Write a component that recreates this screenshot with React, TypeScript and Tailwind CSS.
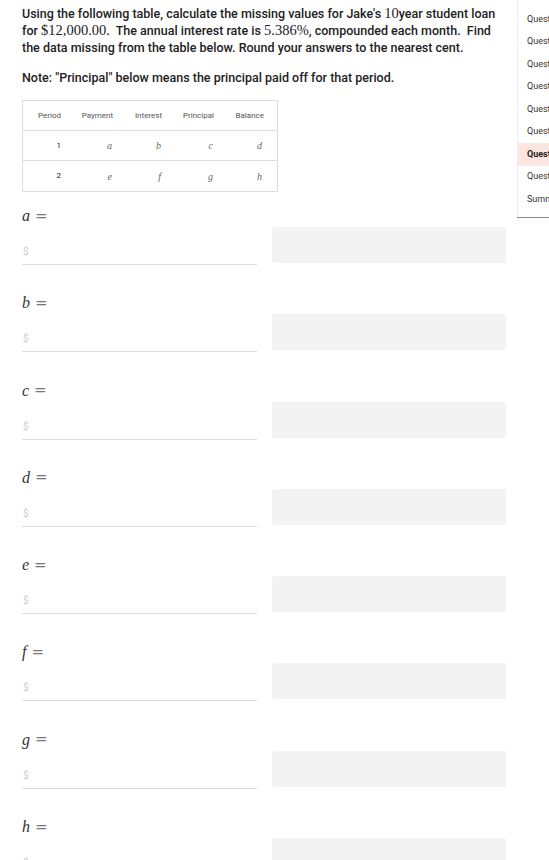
import React from "react";

const serif = { fontFamily: '"Liberation Serif", "DejaVu Serif", serif' };

const rows = [
  { period: "1", cells: ["a", "b", "c", "d"] },
  { period: "2", cells: ["e", "f", "g", "h"] },
];

const sideItems = ["Quest", "Quest", "Quest", "Quest", "Quest", "Quest", "Quest", "Quest", "Summ"];

function M({ children }: { children: React.ReactNode }) {
  return (
    <span className="text-[14.5px] font-normal" style={serif}>
      {children}
    </span>
  );
}

function AnswerBlock({ letter }: { letter: string }) {
  return (
    <div className="h-[87.3px] flex flex-col">
      <div className="h-[20px] flex items-center gap-[5px] text-[#333]">
        <span className="italic text-[16px] leading-none" style={serif}>
          {letter}
        </span>
        <span
          className="text-[15px] leading-none text-[#777]"
          style={{ fontFamily: '"DejaVu Serif", serif' }}
        >
          =
        </span>
      </div>
      <div className="mt-[1px] flex items-start">
        <div className="w-[235px] h-[38px] border-b border-[#ddd] flex items-end pb-[5px] pl-[1px]">
          <span className="text-[10px] text-[#ccc]" style={{ fontFamily: "Roboto, sans-serif" }}>
            $
          </span>
        </div>
        <div className="ml-[15px] w-[234px] h-[36px] rounded-[2px] bg-[#f3f3f3]" />
      </div>
    </div>
  );
}

export default function App() {
  return (
    <div
      className="w-[549px] h-[860px] overflow-hidden bg-white flex text-[#222]"
      style={{ fontFamily: "Roboto, Arial, sans-serif" }}
    >
      <div className="w-[517px] shrink-0 pl-[22px] pt-[5px]">
        <p className="w-[485px] text-[12.5px] leading-[17px] font-medium">
          Using the following table, calculate the missing values for Jake's <M>10</M>year student loan for{" "}
          <M>$12,000.00</M>.&nbsp; The annual interest rate is <M>5.386%</M>, compounded each month.&nbsp; Find
          the data missing from the table below. Round your answers to the nearest cent.
        </p>
        <p className="mt-[13px] text-[12.5px] leading-[17px] font-medium">
          Note: "Principal" below means the principal paid off for that period.
        </p>

        <div className="mt-[14px] w-[256px] border border-[#ddd]">
          <div className="grid grid-cols-[49px_52px_49px_52px_52px] h-[30px] items-center text-[8px] text-[#555] border-b border-[#ddd]">
            <div className="text-right pr-[11px]">Period</div>
            <div className="text-right pr-[11px]">Payment</div>
            <div className="text-right pr-[11px]">Interest</div>
            <div className="text-right pr-[11px]">Principal</div>
            <div className="text-right pr-[13px]">Balance</div>
          </div>
          {rows.map((r, i) => (
            <div
              key={r.period}
              className={`grid grid-cols-[49px_52px_49px_52px_52px] h-[30px] items-center ${
                i === 0 ? "border-b border-[#ddd]" : ""
              }`}
            >
              <div className="text-right pr-[11px] text-[8px] text-[#111]">{r.period}</div>
              {r.cells.map((c, j) => (
                <div
                  key={c}
                  className={`text-right italic text-[10px] text-[#666] ${j === 3 ? "pr-[15px]" : "pr-[12px]"}`}
                  style={serif}
                >
                  {c}
                </div>
              ))}
            </div>
          ))}
        </div>

        <div className="mt-[14px]">
          {["a", "b", "c", "d", "e", "f", "g", "h"].map((l) => (
            <AnswerBlock key={l} letter={l} />
          ))}
        </div>
      </div>

      <div className="w-[32px] shrink-0 self-start">
        <div className="border-l border-[#eee] pt-[8px] pb-[6px]">
          {sideItems.map((s, i) => (
            <div
              key={i}
              className={`h-[22.5px] flex items-center pl-[9px] text-[9px] whitespace-nowrap overflow-hidden ${
                i === 6 ? "bg-[#fde6df] font-bold text-[#222]" : "text-[#333]"
              }`}
            >
              {s}
            </div>
          ))}
        </div>
        <div className="h-[1px] bg-[#888]" />
      </div>
    </div>
  );
}
